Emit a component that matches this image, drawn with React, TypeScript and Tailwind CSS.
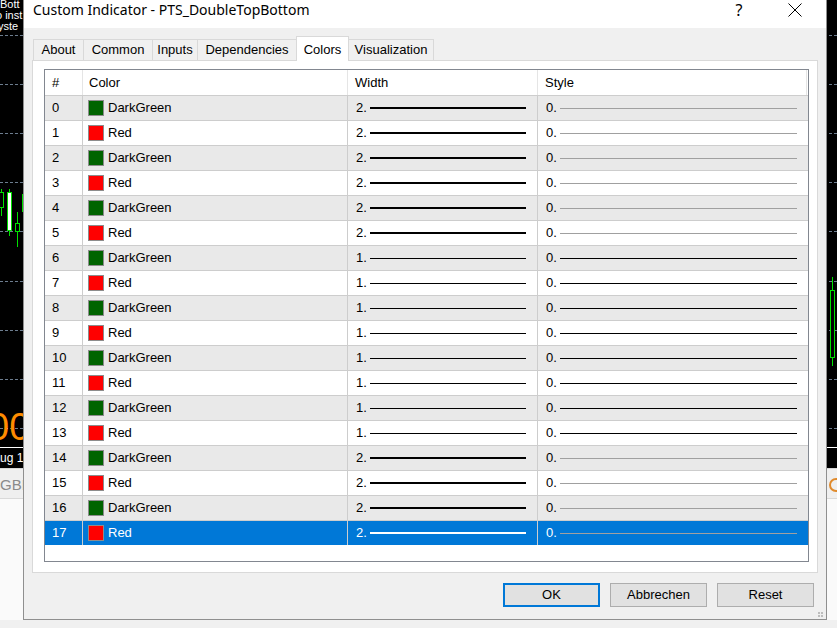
import React from "react";

const GRID_Y = [35, 84, 133, 182, 231, 281, 330, 379, 428];

const rows = Array.from({ length: 18 }, (_, i) => ({
  idx: i,
  name: i % 2 === 0 ? "DarkGreen" : "Red",
  color: i % 2 === 0 ? "#006400" : "#ff0000",
  width: i >= 6 && i <= 13 ? 1 : 2,
}));

const tabs = [
  { label: "About", w: 50 },
  { label: "Common", w: 69 },
  { label: "Inputs", w: 45 },
  { label: "Dependencies", w: 99 },
  { label: "Colors", w: 52, active: true },
  { label: "Visualization", w: 85 },
];

function Candle(props: { x: number; w: number; bodyTop: number; bodyBottom: number; wickTop: number; wickBottom: number; fill: string }) {
  const { x, w, bodyTop, bodyBottom, wickTop, wickBottom, fill } = props;
  const cx = x + Math.floor(w / 2);
  return (
    <>
      <div className="absolute bg-[#00e000]" style={{ left: cx, top: wickTop, width: 1, height: wickBottom - wickTop }} />
      <div
        className="absolute border border-[#00e000]"
        style={{ left: x, top: bodyTop, width: w, height: bodyBottom - bodyTop, background: fill }}
      />
    </>
  );
}

function ChartBackground() {
  return (
    <>
      {GRID_Y.map((y) => (
        <div key={y} className="absolute left-0 right-0 border-t border-dashed border-[#6d7d8f]" style={{ top: y }} />
      ))}
      <Candle x={830} w={5} bodyTop={290} bodyBottom={358} wickTop={277} wickBottom={366} fill="#000" />
      <div className="absolute left-[826px] top-[357px] w-px h-[24px] bg-[#00e000]" />
      <div className="absolute left-0 right-0 top-[447px] h-px bg-white" />
      <div className="absolute left-0 right-0 top-[468px] h-[30px] bg-[#efefef] border-t border-[#d6d6d6]" />
      <div className="absolute left-0 right-0 top-[498px] bottom-0 bg-[#fafafa] border-t border-[#d9d9d9]" />
      <div className="absolute left-[829px] top-[478px] w-[14px] h-[14px] rounded-full border-2 border-[#e08a2c]" />
      <div className="absolute left-0 right-0 top-[620px] bottom-0 bg-[#f0f0f0]" />

      {/* left strip, clipped */}
      <div className="absolute left-0 top-0 w-[23px] h-[500px] overflow-hidden font-['Liberation_Sans',sans-serif]">
        <div className="absolute left-0 top-[-1px] text-[11px] leading-[11px] text-white whitespace-nowrap">Bott</div>
        <div className="absolute left-[-4px] top-[10px] text-[11px] leading-[11px] text-white whitespace-nowrap">o inst</div>
        <div className="absolute left-[-2px] top-[21px] text-[11px] leading-[11px] text-white whitespace-nowrap">yste</div>
        <Candle x={-1} w={5} bodyTop={192} bodyBottom={208} wickTop={189} wickBottom={216} fill="#000" />
        <Candle x={7} w={5} bodyTop={192} bodyBottom={231} wickTop={189} wickBottom={236} fill="#fff" />
        <Candle x={15} w={5} bodyTop={223} bodyBottom={232} wickTop={212} wickBottom={247} fill="#000" />
        <div className="absolute left-[22px] top-[194px] w-px h-[18px] bg-[#00e000]" />
        <div className="absolute left-[-12px] top-[408px] text-[38px] leading-[38px] text-[#ff8c00]">00</div>
        <div className="absolute left-[-8px] top-[452px] text-[12px] leading-[13px] text-white whitespace-nowrap">Aug 1</div>
        <div className="absolute left-0 top-[476px] text-[15px] leading-[18px] text-[#8a8a8a] whitespace-nowrap">GBP</div>
      </div>
    </>
  );
}

function Row({ r }: { r: (typeof rows)[number] }) {
  const selected = r.idx === 17;
  const bg = selected ? "bg-[#0078d7] text-white" : r.idx % 2 === 0 ? "bg-[#e9e9e9] text-black" : "bg-white text-black";
  const widthLine = selected ? "bg-white" : "bg-black";
  const widthH = r.width === 2 ? "h-[2px]" : "h-px";
  const styleLine = r.width === 2 ? "bg-[#a0a0a0]" : "bg-black";
  return (
    <div className={`flex h-[25px] border-t border-[#cdcdcd] ${bg}`}>
      <div className="w-[38px] border-r border-[#cdcdcd] pl-[7px] flex items-center">{r.idx}</div>
      <div className="w-[265px] border-r border-[#cdcdcd] pl-[5px] flex items-center">
        <div className="w-[16px] h-[16px] border border-[#8c8c8c]" style={{ background: r.color }} />
        <span className="ml-[4px]">{r.name}</span>
      </div>
      <div className="w-[190px] border-r border-[#cdcdcd] pl-[8px] flex items-center">
        <span className="w-[14px]">{r.width}.</span>
        <div className={`w-[156px] ${widthH} ${widthLine}`} />
      </div>
      <div className="w-[269px] pl-[8px] flex items-center">
        <span className="w-[14px]">0.</span>
        <div className={`w-[237px] h-px ${styleLine}`} />
      </div>
    </div>
  );
}

export default function App() {
  return (
    <div className="relative w-[837px] h-[628px] overflow-hidden bg-black font-['Liberation_Sans',Arial,sans-serif] text-[13px]">
      <ChartBackground />
      <div className="absolute left-[23px] top-0 w-[804px] h-[620px] bg-[#f0f0f0] border-x border-b border-[#8f8f8f] flex flex-col">
        {/* Title bar */}
        <div className="h-[28px] bg-white flex items-center shrink-0">
          <div className="pl-[9px] text-[14px] text-[#000] font-['Noto_Sans',sans-serif] leading-[20px] mt-[-8px]">
            Custom Indicator - PTS_DoubleTopBottom
          </div>
          <div className="ml-auto flex items-center mr-[8px] mt-[-8px]">
            <div className="w-[46px] flex justify-center text-[16px] font-['Noto_Sans',sans-serif] leading-[20px]">?</div>
            <div className="w-[46px] ml-[10px] flex justify-center">
              <svg width="14" height="14" viewBox="0 0 14 14">
                <path d="M0.5 0.5 L13.5 13.5 M13.5 0.5 L0.5 13.5" stroke="#000" strokeWidth="1" fill="none" />
              </svg>
            </div>
          </div>
        </div>

        {/* Tabs */}
        <div className="flex items-end h-[32px] pl-[9px] shrink-0">
          {tabs.map((t) =>
            t.active ? (
              <div
                key={t.label}
                className="relative z-10 -ml-px h-[25px] mb-[-1px] bg-white border-x border-t border-[#d9d9d9] flex items-start justify-center pt-[3px]"
                style={{ width: t.w + 1 }}
              >
                {t.label}
              </div>
            ) : (
              <div
                key={t.label}
                className="-ml-px first:ml-0 h-[21px] bg-[#f0f0f0] border-x border-t border-[#d9d9d9] flex items-center justify-center"
                style={{ width: t.w + 1 }}
              >
                {t.label}
              </div>
            )
          )}
        </div>

        {/* Tab panel */}
        <div className="mx-[8px] h-[513px] bg-white border border-[#d9d9d9] pl-[11px] pt-[8px] shrink-0">
          <div className="w-[765px] h-[493px] border border-[#828790] bg-white">
            <div className="flex h-[25px] bg-white text-black">
              <div className="w-[38px] border-r border-[#e5e5e5] pl-[7px] flex items-center">#</div>
              <div className="w-[265px] border-r border-[#e5e5e5] pl-[6px] flex items-center">Color</div>
              <div className="w-[190px] border-r border-[#e5e5e5] pl-[7px] flex items-center">Width</div>
              <div className="w-[269px] border-r border-[#e5e5e5] pl-[7px] flex items-center">Style</div>
            </div>
            {rows.map((r) => (
              <Row key={r.idx} r={r} />
            ))}
          </div>
        </div>

        {/* Buttons */}
        <div className="flex justify-end gap-[10px] pr-[12px] mt-[10px]">
          <button className="w-[97px] h-[24px] bg-[#e1e1e1] border-2 border-[#0078d7] text-black">OK</button>
          <button className="w-[97px] h-[24px] bg-[#e1e1e1] border border-[#adadad] text-black">Abbrechen</button>
          <button className="w-[97px] h-[24px] bg-[#e1e1e1] border border-[#adadad] text-black">Reset</button>
        </div>

        <div className="absolute right-[3px] bottom-[2px] grid grid-cols-2 gap-[1px]">
          <div className="w-[2px] h-[2px] bg-[#bdbdbd]" />
          <div className="w-[2px] h-[2px] bg-[#bdbdbd]" />
          <div className="w-[2px] h-[2px] bg-[#bdbdbd]" />
          <div className="w-[2px] h-[2px] bg-[#bdbdbd]" />
        </div>
      </div>
    </div>
  );
}
